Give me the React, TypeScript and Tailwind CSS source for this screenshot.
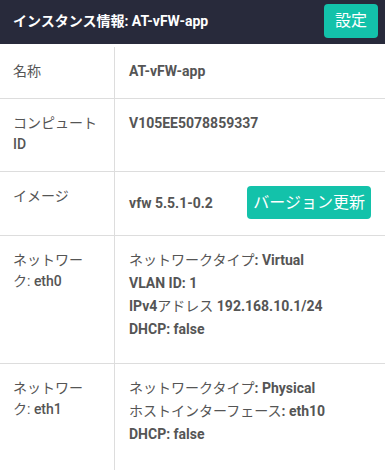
import React from "react";

const font = { fontFamily: 'Roboto, "Noto Sans CJK JP", sans-serif' };

function Label({ children }: { children: React.ReactNode }) {
  return (
    <div className="w-[115px] shrink-0 border-r border-[#dddddd] pl-[13px] pr-[16px] pt-[14px] pb-[16px] text-[14px] leading-[21px] text-[#555555]">
      {children}
    </div>
  );
}

function Jp({ children }: { children: React.ReactNode }) {
  return <span className="font-normal">{children}</span>;
}

function Row({ label, children, last }: { label: React.ReactNode; children: React.ReactNode; last?: boolean }) {
  return (
    <div className={`flex ${last ? "" : "border-b border-[#dddddd]"}`}>
      <Label>{label}</Label>
      <div className="min-w-0 flex-1 pl-[14px] pr-[14px] text-[14px] font-bold leading-[20px] text-[#555555]">
        {children}
      </div>
    </div>
  );
}

export default function App() {
  const eth0 = [
    <>
      <Jp>ネットワークタイプ</Jp>: Virtual
    </>,
    <>VLAN ID: 1</>,
    <>
      IPv4<Jp>アドレス</Jp> 192.168.10.1/24
    </>,
    <>DHCP: false</>,
  ];
  const eth1 = [
    <>
      <Jp>ネットワークタイプ</Jp>: Physical
    </>,
    <>
      <Jp>ホストインターフェース</Jp>: eth10
    </>,
    <>DHCP: false</>,
  ];

  return (
    <div className="h-[470px] w-[385px] overflow-hidden bg-white" style={font}>
      <header className="flex h-[44px] items-start justify-between bg-[#282a3b] pl-[13px] pr-[7px] pt-[4px]">
        <div className="flex h-[34px] items-center text-[14px] font-bold text-white">インスタンス情報: AT-vFW-app</div>
        <button className="h-[34px] rounded-[4px] bg-[#13c2aa] px-[11px] text-[16px] text-white">設定</button>
      </header>

      <div className="mt-[3px]">
        <Row label="名称">
          <div className="pt-[14px]">AT-vFW-app</div>
        </Row>
        <Row
          label={
            <>
              コンピュート <span className="font-medium">ID</span>
            </>
          }
        >
          <div className="pt-[14px]">V105EE5078859337</div>
        </Row>
        <Row label="イメージ">
          <div className="flex items-center justify-between pt-[14px] pb-[16px]">
            <span>vfw 5.5.1-0.2</span>
            <button className="h-[33px] rounded-[4px] bg-[#13c2aa] px-[6px] text-[16px] font-normal text-white">
              バージョン更新
            </button>
          </div>
        </Row>
        <Row
          label={
            <>
              ネットワーク: <span className="font-medium">eth0</span>
            </>
          }
        >
          <div className="pt-[14px] pb-[21px]">
            {eth0.map((line, i) => (
              <div key={i} className="mb-[3px]">
                {line}
              </div>
            ))}
          </div>
        </Row>
        <Row
          last
          label={
            <>
              ネットワーク: <span className="font-medium">eth1</span>
            </>
          }
        >
          <div className="min-h-[110px] pt-[14px] pb-[22px]">
            {eth1.map((line, i) => (
              <div key={i} className="mb-[3px]">
                {line}
              </div>
            ))}
          </div>
        </Row>
      </div>
    </div>
  );
}
